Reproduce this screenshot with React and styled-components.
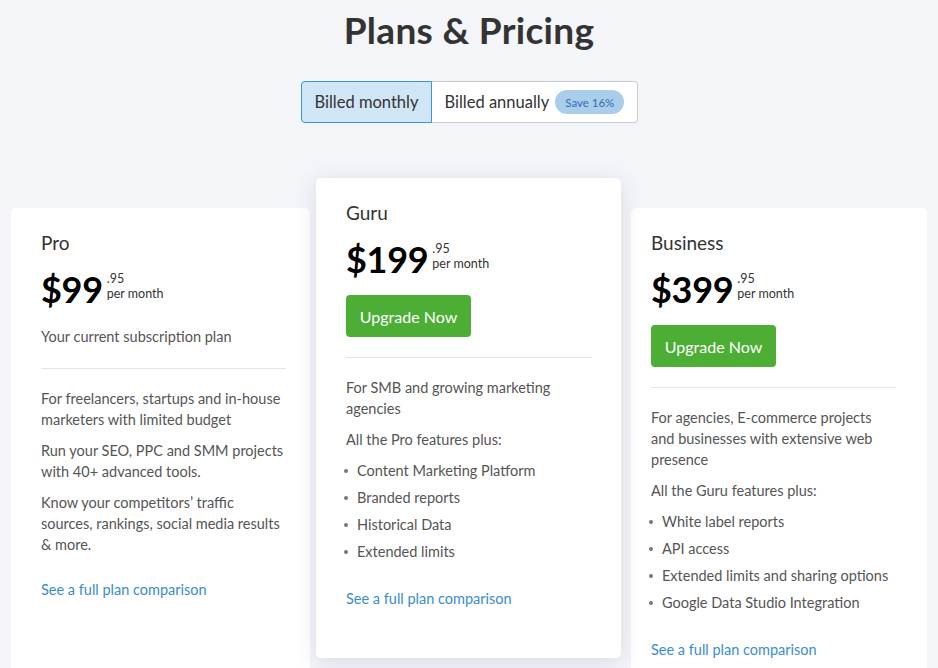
import React, { useState } from 'react';
import styled, { createGlobalStyle } from 'styled-components';

const GlobalStyle = createGlobalStyle`
  html, body {
    margin: 0;
    padding: 0;
    background: #f3f5f9;
    font-family: Lato, "Open Sans", sans-serif;
    color: #333;
    overflow: hidden;
  }
  * { box-sizing: border-box; }
`;

const Page = styled.div`
  width: 938px;
  height: 668px;
  padding-top: 7px;
`;

const Title = styled.h1`
  margin: 0;
  text-align: center;
  font-size: 37px;
  line-height: 45px;
  font-weight: 700;
  color: #333;
  letter-spacing: 0.3px;
`;

const Toggle = styled.div`
  display: flex;
  justify-content: center;
  margin-top: 29px;
`;

const ToggleButton = styled.button`
  height: 42px;
  display: flex;
  align-items: center;
  gap: 6px;
  padding: 0 12px 0 13px;
  font-family: inherit;
  font-size: 16.5px;
  color: #333;
  cursor: pointer;
  background: ${p => (p.$active ? '#d0e5f6' : '#fff')};
  border: 1px solid ${p => (p.$active ? '#3b93d6' : '#c8ccd2')};
  border-radius: ${p => (p.$first ? '4px 0 0 4px' : '0 4px 4px 0')};
  ${p => (p.$first ? '' : 'border-left: none;')}
  width: ${p => p.$w}px;
`;

const Badge = styled.span`
  display: inline-flex;
  align-items: center;
  height: 24px;
  padding: 0 10px;
  border-radius: 12px;
  background: #a9cdeb;
  color: #2f6fb0;
  font-size: 11.5px;
`;

const Row = styled.div`
  display: flex;
  align-items: flex-start;
  margin-top: 55px;
  padding-left: 11px;
`;

const Card = styled.div`
  width: ${p => p.$w}px;
  margin-top: ${p => (p.$featured ? 0 : 30)}px;
  margin-left: ${p => p.$ml || 0}px;
  padding: 23px ${p => p.$pr}px 0 ${p => p.$pl}px;
  height: ${p => (p.$featured ? 480 : 520)}px;
  background: #fff;
  border-radius: 5px;
  position: relative;
  z-index: ${p => (p.$featured ? 2 : 1)};
  box-shadow: ${p => (p.$featured ? '0 4px 22px rgba(40, 50, 70, 0.13)' : 'none')};
`;

const PlanName = styled.div`
  font-size: 19px;
  line-height: 24px;
  color: #333;
`;

const PriceRow = styled.div`
  display: flex;
  align-items: center;
  margin-top: 11px;
  height: 46px;
`;

const Amount = styled.span`
  font-size: 36px;
  line-height: 36px;
  font-weight: 700;
  color: #000;
  letter-spacing: -0.3px;
`;

const PriceMeta = styled.div`
  display: flex;
  flex-direction: column;
  margin-left: 4px;
  margin-top: -6px;
  font-size: 12.5px;
  line-height: 15px;
  color: #333;
`;

const Current = styled.div`
  margin-top: 15px;
  font-size: 14.5px;
  color: #555;
  line-height: 20px;
`;

const Upgrade = styled.button`
  margin-top: 13px;
  height: 42px;
  width: 125px;
  border: none;
  border-radius: 4px;
  background: #4dae35;
  color: #fff;
  font-family: inherit;
  font-size: 16px;
  cursor: pointer;
`;

const Divider = styled.hr`
  margin: ${p => p.$top}px 0 19px;
  border: none;
  border-top: 1px solid #e2e4e8;
`;

const Para = styled.p`
  margin: 0 0 10px;
  font-size: 14.5px;
  line-height: 21px;
  color: #555;
  &:last-of-type {
    margin-bottom: 7px;
  }
`;

const List = styled.ul`
  list-style: none;
  margin: 0;
  padding: 0;
`;

const Item = styled.li`
  display: flex;
  align-items: center;
  height: 27px;
  font-size: 14.5px;
  color: #555;
  &::before {
    content: '';
    width: 4px;
    height: 4px;
    border-radius: 50%;
    background: #777;
    margin: 0 9px 0 -2px;
  }
`;

const Link = styled.a`
  display: block;
  margin-top: ${p => p.$top}px;
  font-size: 14.5px;
  color: #3a8dcf;
  text-decoration: none;
  cursor: pointer;
`;

const plans = [
  {
    name: 'Pro',
    price: '$99',
    w: 299,
    pl: 30,
    pr: 24,
    current: true,
    paras: [
      'For freelancers, startups and in-house marketers with limited budget',
      'Run your SEO, PPC and SMM projects with 40+ advanced tools.',
      'Know your competitors’ traffic sources, rankings, social media results & more.',
    ],
    linkTop: 26,
  },
  {
    name: 'Guru',
    price: '$199',
    w: 305,
    ml: 6,
    pl: 30,
    pr: 29,
    featured: true,
    paras: ['For SMB and growing marketing agencies', 'All the Pro features plus:'],
    items: ['Content Marketing Platform', 'Branded reports', 'Historical Data', 'Extended limits'],
    linkTop: 25,
  },
  {
    name: 'Business',
    price: '$399',
    w: 296,
    ml: 10,
    pl: 20,
    pr: 31,
    paras: [
      'For agencies, E-commerce projects and businesses with extensive web presence',
      'All the Guru features plus:',
    ],
    items: [
      'White label reports',
      'API access',
      'Extended limits and sharing options',
      'Google Data Studio Integration',
    ],
    linkTop: 25,
  },
];

const PlanCard = ({ plan }) => (
  <Card $w={plan.w} $ml={plan.ml} $pl={plan.pl} $pr={plan.pr} $featured={plan.featured}>
    <PlanName>{plan.name}</PlanName>
    <PriceRow>
      <Amount>{plan.price}</Amount>
      <PriceMeta>
        <span>.95</span>
        <span>per month</span>
      </PriceMeta>
    </PriceRow>
    {plan.current ? (
      <>
        <Current>Your current subscription plan</Current>
        <Divider $top={21} />
      </>
    ) : (
      <>
        <Upgrade>Upgrade Now</Upgrade>
        <Divider $top={20} />
      </>
    )}
    {plan.paras.map(t => (
      <Para key={t}>{t}</Para>
    ))}
    {plan.items && (
      <List>
        {plan.items.map(t => (
          <Item key={t}>{t}</Item>
        ))}
      </List>
    )}
    <Link $top={plan.linkTop}>See a full plan comparison</Link>
  </Card>
);

const App = () => {
  const [billing, setBilling] = useState('monthly');
  return (
    <Page>
      <GlobalStyle />
      <Title>Plans &amp; Pricing</Title>
      <Toggle>
        <ToggleButton $first $w={131} $active={billing === 'monthly'} onClick={() => setBilling('monthly')}>
          Billed monthly
        </ToggleButton>
        <ToggleButton $w={206} $active={billing === 'annually'} onClick={() => setBilling('annually')}>
          Billed annually <Badge>Save 16%</Badge>
        </ToggleButton>
      </Toggle>
      <Row>
        {plans.map(p => (
          <PlanCard key={p.name} plan={p} />
        ))}
      </Row>
    </Page>
  );
};

export default App;
